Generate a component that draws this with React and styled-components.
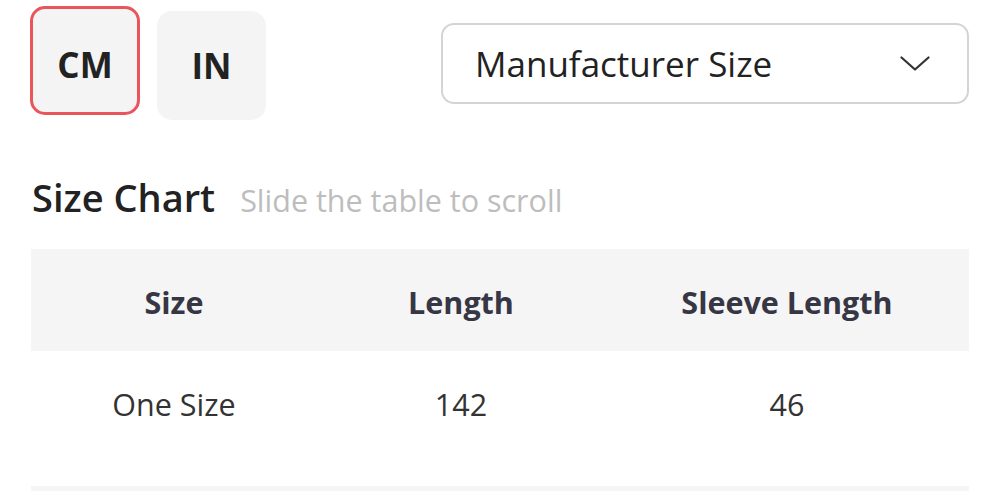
import React from 'react';
import styled, { createGlobalStyle } from 'styled-components';

const GlobalStyle = createGlobalStyle`
  html, body {
    margin: 0;
    padding: 0;
    background: #ffffff;
    overflow: hidden;
  }
  body {
    font-family: "Open Sans", "Noto Sans", "Liberation Sans", sans-serif;
    color: #222222;
  }
`;

const columns = ['Size', 'Length', 'Sleeve Length'];
const rows = [
  ['One Size', '142', '46'],
];

const App = () => {
  const [unit, setUnit] = React.useState('CM');

  return (
    <Page>
      <GlobalStyle />
      <TopBar>
        <UnitGroup>
          {['CM', 'IN'].map((u) => (
            <UnitButton key={u} $active={unit === u} onClick={() => setUnit(u)}>
              {u}
            </UnitButton>
          ))}
        </UnitGroup>
        <SizeSelect>
          <SelectLabel>Manufacturer Size</SelectLabel>
          <Chevron viewBox="0 0 30 15" aria-hidden="true">
            <polyline points="1.5,1.5 15,13.5 28.5,1.5" />
          </Chevron>
        </SizeSelect>
      </TopBar>

      <TitleRow>
        <Title>Size Chart</Title>
        <Hint>Slide the table to scroll</Hint>
      </TitleRow>

      <Table>
        <HeadRow>
          {columns.map((c) => (
            <HeadCell key={c}>{c}</HeadCell>
          ))}
        </HeadRow>
        {rows.map((r, i) => (
          <BodyRow key={`row-${i}`} $striped={i % 2 === 1}>
            {r.map((v, j) => (
              <BodyCell key={`cell-${i}-${j}`}>{v}</BodyCell>
            ))}
          </BodyRow>
        ))}
        <StripeRow />
      </Table>
    </Page>
  );
};

const Page = styled('div')`
  padding: 6px 31px 0 30px;
`;

const TopBar = styled('div')`
  align-items: flex-start;
  display: flex;
  justify-content: space-between;
`;

const UnitGroup = styled('div')`
  align-items: flex-start;
  display: flex;
  gap: 17px;
`;

const UnitButton = styled('button')`
  align-items: center;
  background: #f4f4f4;
  border: 3px solid ${(p) => (p.$active ? '#e9555b' : 'transparent')};
  border-radius: 15px;
  box-sizing: border-box;
  color: #222222;
  cursor: pointer;
  display: flex;
  font-family: "Open Sans", "Noto Sans", sans-serif;
  font-size: 35px;
  font-weight: 700;
  height: 109px;
  justify-content: center;
  margin-top: ${(p) => (p.$active ? '0' : '5px')};
  padding: ${(p) => (p.$active ? '8px 0 0' : '0')};
  width: ${(p) => (p.$active ? '110px' : '109px')};
`;

const SizeSelect = styled('div')`
  align-items: center;
  border: 2px solid #d4d4d4;
  border-radius: 13px;
  box-sizing: border-box;
  display: flex;
  height: 81px;
  justify-content: space-between;
  margin-top: 17px;
  padding: 0 37px 0 32px;
  width: 528px;
`;

const SelectLabel = styled('span')`
  color: #222222;
  font-size: 35px;
  line-height: 44px;
`;

const Chevron = styled('svg')`
  fill: none;
  height: 15px;
  stroke: #333333;
  stroke-linecap: round;
  stroke-linejoin: round;
  stroke-width: 2.2;
  width: 30px;
`;

const TitleRow = styled('div')`
  align-items: baseline;
  display: flex;
  gap: 25px;
  margin-top: 53px;
  padding-left: 2px;
`;

const Title = styled('h2')`
  color: #222222;
  font-size: 38px;
  font-weight: 600;
  line-height: 48px;
  margin: 0;
`;

const Hint = styled('span')`
  color: #bdbdbd;
  font-size: 30.5px;
  line-height: 40px;
`;

const Table = styled('div')`
  margin-left: 1px;
  margin-top: 28px;
`;

const Row = styled('div')`
  display: grid;
  grid-template-columns: 286px 288px 1fr;
`;

const HeadRow = styled(Row)`
  align-items: center;
  background: #f5f5f5;
  height: 102px;
`;

const HeadCell = styled('div')`
  color: #363644;
  font-size: 30.5px;
  font-weight: 700;
  line-height: 40px;
  padding-top: 4px;
  text-align: center;
`;

const BodyRow = styled(Row)`
  background: ${(p) => (p.$striped ? '#f5f5f5' : '#ffffff')};
  box-sizing: border-box;
  height: 135px;
  padding-top: 33px;
`;

const BodyCell = styled('div')`
  color: #333333;
  font-size: 30.5px;
  line-height: 40px;
  text-align: center;
`;

const StripeRow = styled('div')`
  background: #f5f5f5;
  height: 5px;
`;

export default App;
